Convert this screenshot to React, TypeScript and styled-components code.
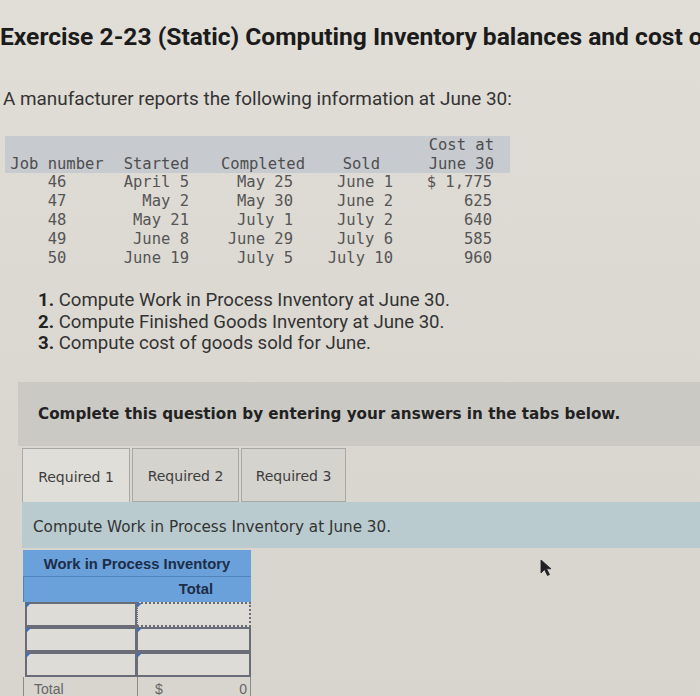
import React from "react";
import styled, { createGlobalStyle } from "styled-components";

const Global = createGlobalStyle`
  html, body { margin: 0; padding: 0; }
  body { width: 700px; height: 696px; overflow: hidden; background: #dbd8d1; }
`;

const Page = styled.div`
  position: relative;
  width: 700px;
  height: 696px;
  overflow: hidden;
  background: linear-gradient(180deg, #e1ded8 0%, #dad7d0 60%, #d8d5ce 100%);
  font-family: Roboto, "Open Sans", sans-serif;
`;

const Title = styled.h1`
  margin: 21px 0 0 0;
  width: 700px;
  overflow: hidden;
  white-space: nowrap;
  font-family: Roboto, sans-serif;
  font-weight: 700;
  font-size: 24.6px;
  line-height: 32px;
  color: #1b1b1b;
`;

const Intro = styled.p`
  margin: 34px 0 0 3px;
  font-size: 18.9px;
  line-height: 24px;
  color: #333;
  white-space: nowrap;
`;

const DataGrid = styled.div`
  margin: 25px 0 0 5px;
  width: 505px;
  display: grid;
  grid-template-columns: 104px 84px 117px 90px 110px;
  font-family: "DejaVu Sans Mono", monospace;
  font-size: 15.5px;
  color: #555;
`;

const HeadCell = styled.div<{ $align: string; $pr: number }>`
  background: #c7cace;
  height: 37px;
  display: flex;
  flex-direction: column;
  justify-content: flex-end;
  line-height: 18.5px;
  text-align: ${(p) => p.$align};
  padding-right: ${(p) => p.$pr}px;
  white-space: nowrap;
  color: #4e4e4e;
`;

const Cell = styled.div<{ $align: string; $pr: number }>`
  line-height: 19px;
  text-align: ${(p) => p.$align};
  padding-right: ${(p) => p.$pr}px;
  white-space: pre;
`;

const List = styled.ol`
  margin: 22px 0 0 38px;
  padding: 0;
  list-style: none;
  font-size: 18.6px;
  line-height: 21.5px;
  color: #333;
`;

const Num = styled.b`
  font-weight: 700;
  color: #222;
`;

const Notice = styled.div`
  margin: 27px 0 0 18px;
  height: 64px;
  box-sizing: border-box;
  padding: 22px 0 0 20px;
  background: #cac9c4;
  font-family: "DejaVu Sans", Verdana, sans-serif;
  font-weight: 700;
  font-size: 15.2px;
  line-height: 20px;
  color: #222;
  white-space: nowrap;
`;

const Tabs = styled.div`
  margin: 2px 0 0 22px;
  display: flex;
  height: 54px;
`;

const Tab = styled.div<{ $active?: boolean; $w: number }>`
  width: ${(p) => p.$w}px;
  box-sizing: border-box;
  border: 1px solid #a8a8a4;
  border-bottom: ${(p) => (p.$active ? "none" : "1px solid #a8a8a4")};
  margin-right: 2px;
  background: ${(p) => (p.$active ? "#e0ded8" : "#d4d3ce")};
  font-family: "DejaVu Sans", Verdana, sans-serif;
  font-size: 14px;
  color: #3d3d3d;
  display: flex;
  align-items: center;
  justify-content: center;
  padding-top: 3px;
`;

const Band = styled.div`
  margin-left: 22px;
  height: 46px;
  box-sizing: border-box;
  padding: 5px 0 0 11px;
  background: #b9cbcf;
  font-family: "DejaVu Sans", Verdana, sans-serif;
  font-size: 15.2px;
  color: #333;
  display: flex;
  align-items: center;
`;

const Wip = styled.div`
  margin: 2px 0 0 23px;
  width: 228px;
  display: grid;
  grid-template-columns: 114px 114px;
  font-family: "Liberation Sans", Arial, sans-serif;
`;

const WipTitle = styled.div`
  grid-column: 1 / span 2;
  height: 24px;
  background: #6aa1da;
  border-bottom: 1px solid #4f84bd;
  font-weight: 700;
  font-size: 14.8px;
  color: #1d2d48;
  display: flex;
  align-items: center;
  justify-content: center;
  padding-top: 2px;
`;

const WipHead = styled.div<{ $label?: boolean }>`
  height: 25px;
  background: #6aa1da;
  border-left: ${(p) => (p.$label ? "1px solid #4f84bd" : "none")};
  font-weight: 700;
  font-size: 14.8px;
  color: #1d2d48;
  display: flex;
  align-items: center;
  justify-content: flex-end;
  padding-right: 38px;
`;

const InputCell = styled.div<{ $dotted?: boolean; $right?: boolean }>`
  position: relative;
  height: 25px;
  box-sizing: border-box;
  background: #dedcd6;
  border: 2px ${(p) => (p.$dotted ? "dotted" : "solid")} #6a6d78;
  border-left-width: ${(p) => (p.$right ? "1px" : "2px")};
  margin-left: ${(p) => (p.$right ? "0" : "2px")};
  &::before {
    content: "";
    position: absolute;
    left: -1px;
    top: -1px;
    border-top: 5px solid #3e6fb0;
    border-right: 5px solid transparent;
  }
`;

const TotalCell = styled.div<{ $right?: boolean }>`
  height: 24px;
  box-sizing: border-box;
  border-left: 1px solid #8a8a88;
  border-right: ${(p) => (p.$right ? "1px solid #8a8a88" : "none")};
  font-size: 14px;
  color: #666;
  display: flex;
  align-items: center;
  justify-content: space-between;
  padding: 0 3px 0 10px;
`;

const Dollar = styled.span`
  margin-left: 7px;
`;

const Pointer = styled.svg`
  position: absolute;
  left: 540px;
  top: 559px;
`;

const headers: [React.ReactNode, string, number][] = [
  ["Job number", "center", 0],
  ["Started", "right", 4],
  ["Completed", "right", 5],
  ["Sold", "right", 20],
  [
    <>
      <span>Cost at</span>
      <span>June 30</span>
    </>,
    "right",
    16,
  ],
];

const rows = [
  ["46", "April 5", "May 25", "June 1", "$ 1,775"],
  ["47", "May 2", "May 30", "June 2", "625"],
  ["48", "May 21", "July 1", "July 2", "640"],
  ["49", "June 8", "June 29", "July 6", "585"],
  ["50", "June 19", "July 5", "July 10", "960"],
];

const cellAlign: [string, number][] = [
  ["center", 0],
  ["right", 4],
  ["right", 17],
  ["right", 7],
  ["right", 18],
];

export default function App() {
  return (
    <Page>
      <Global />
      <Title>Exercise 2-23 (Static) Computing Inventory balances and cost of goods sold LO P1, P2, P3</Title>
      <Intro>A manufacturer reports the following information at June 30:</Intro>
      <DataGrid>
        {headers.map(([h, a, pr], i) => (
          <HeadCell key={i} $align={a} $pr={pr}>
            {typeof h === "string" ? <span>{h}</span> : h}
          </HeadCell>
        ))}
        {rows.map((r, ri) =>
          r.map((c, ci) => (
            <Cell key={`${ri}-${ci}`} $align={cellAlign[ci][0]} $pr={cellAlign[ci][1]}>
              {c}
            </Cell>
          ))
        )}
      </DataGrid>
      <List>
        <li>
          <Num>1.</Num> Compute Work in Process Inventory at June 30.
        </li>
        <li>
          <Num>2.</Num> Compute Finished Goods Inventory at June 30.
        </li>
        <li>
          <Num>3.</Num> Compute cost of goods sold for June.
        </li>
      </List>
      <Notice>Complete this question by entering your answers in the tabs below.</Notice>
      <Tabs>
        <Tab $active $w={108}>Required 1</Tab>
        <Tab $w={107}>Required 2</Tab>
        <Tab $w={105}>Required 3</Tab>
      </Tabs>
      <Band>Compute Work in Process Inventory at June 30.</Band>
      <Wip>
        <WipTitle>Work in Process Inventory</WipTitle>
        <WipHead $label />
        <WipHead>Total</WipHead>
        <InputCell />
        <InputCell $right $dotted />
        <InputCell />
        <InputCell $right />
        <InputCell />
        <InputCell $right />
        <TotalCell>Total</TotalCell>
        <TotalCell $right>
          <Dollar>$</Dollar>
          <span>0</span>
        </TotalCell>
      </Wip>
      <Pointer width="14" height="18" viewBox="0 0 14 18">
        <path d="M1 1 L1 14 L4.5 10.5 L7.5 16.5 L9.5 15.5 L6.5 9.8 L11 9.8 Z" fill="#1f1f26" stroke="#1f1f26" strokeWidth="0.8" />
      </Pointer>
    </Page>
  );
}
